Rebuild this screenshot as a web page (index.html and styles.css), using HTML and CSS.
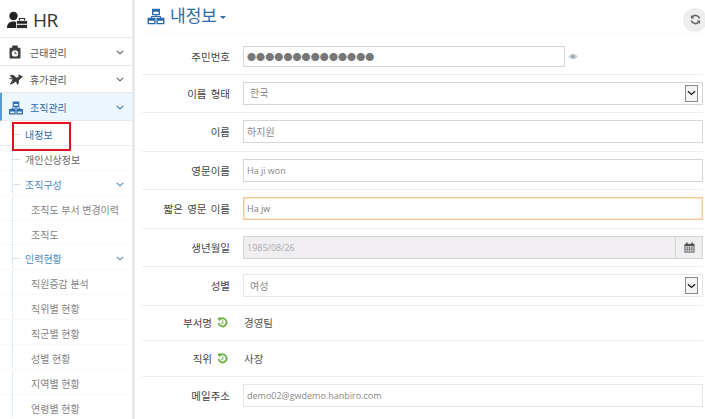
FILE: index.html
```html
<!DOCTYPE html>
<html lang="ko">
  <head>
    <meta charset="UTF-8" />
    <meta name="viewport" content="width=device-width, initial-scale=1" />
    <title>HR</title>
    <link rel="stylesheet" href="styles.css">
  </head>
  <body>
    <svg width="0" height="0" class="defs">
      <symbol id="sitemap" viewBox="0 0 18 18">
        <path d="M5.500 1.500h7v5.500h-7zM.8 11h7v5.500h-7zM10.200 11h7v5.500h-7z" fill="none" stroke="currentColor" stroke-width="1.500"/>
        <path d="M5.500 1.500h7v2.500h-7zM.8 11h7v2.500h-7zM10.200 11h7v2.500h-7z" fill="currentColor"/>
        <path d="M9 7v2M4.300 11V9h9.400v2" fill="none" stroke="currentColor" stroke-width="1.200"/>
      </symbol>
      <symbol id="chevron" viewBox="0 0 10 6">
        <path d="M1 1l4 3.600L9 1" fill="none" stroke="currentColor" stroke-width="1.300"/>
      </symbol>
      <symbol id="history" viewBox="0 0 12 12">
        <path d="M3.400 2.400A4.400 4.400 0 1 1 1.700 6.500" fill="none" stroke="currentColor" stroke-width="2"/>
        <path d="M.6.6h5L2.400 5z" fill="currentColor"/>
        <path d="M6.300 3.600v2.800l-1.600.9" fill="none" stroke="currentColor" stroke-width="1.100"/>
      </symbol>
    </svg>

    <div class="layout">
      <aside class="sidebar">
        <div class="brand">
          <svg class="brand-icon" viewBox="0 0 22 18">
            <circle cx="7.500" cy="5" r="4.200" fill="#222"/>
            <path d="M1 17c0-4 2-6.500 6.500-6.500 2 0 3.500.5 4.500 1.500v5z" fill="#222"/>
            <path d="M10.500 9.500h11v8h-11z" fill="#2b2b2b" stroke="#fff" stroke-width=".8"/>
            <path d="M13.500 9.500V7.500h5v2" fill="none" stroke="#2b2b2b" stroke-width="1.200"/>
            <path d="M10.500 13.300h11" stroke="#fff" stroke-width="1"/>
          </svg>
          <span>HR</span>
        </div>

        <a class="menu-item">
          <svg class="menu-icon" viewBox="0 0 13 15">
            <path d="M3.500.5h6v3h-6z" fill="#333"/>
            <path d="M.8 3h11.400c.3 2 .5 7 0 11.500H.8C.3 10 .5 5 .8 3z" fill="#3c3c3c"/>
            <circle cx="6.500" cy="9" r="3.500" fill="#fff"/>
            <path d="M6.500 7v2.200h1.800" fill="none" stroke="#333" stroke-width="1"/>
          </svg>
          <span class="menu-text">근태관리</span>
          <svg class="chev"><use href="#chevron"/></svg>
        </a>
        <a class="menu-item">
          <svg class="menu-icon" viewBox="0 0 14 11">
            <path d="M.5 1.500L4 .8l3.500 3L10.500 2c1.500-.6 3-.2 3.300.6L10 6.300l-.5 3.700-1.300.7L7 7.500 4.500 9.300 1.500 10.500.8 9.800 2.800 7.200 3.500 4.500z" fill="#3c3c3c"/>
            <path d="M9 .8l3 1.400M.5 4.500l2.500.4" stroke="#3c3c3c" fill="none"/>
          </svg>
          <span class="menu-text">휴가관리</span>
          <svg class="chev"><use href="#chevron"/></svg>
        </a>
        <a class="menu-item active">
          <svg class="menu-icon"><use href="#sitemap"/></svg>
          <span class="menu-text">조직관리</span>
          <svg class="chev"><use href="#chevron"/></svg>
        </a>

        <ul class="submenu">
          <li class="sub current"><span>내정보</span></li>
          <li class="sub"><span>개인신상정보</span></li>
          <li class="sub group"><span>조직구성</span><svg class="chev"><use href="#chevron"/></svg></li>
          <li class="sub deep"><span>조직도 부서 변경이력</span></li>
          <li class="sub deep"><span>조직도</span></li>
          <li class="sub group"><span>인력현황</span><svg class="chev"><use href="#chevron"/></svg></li>
          <li class="sub deep"><span>직원증감 분석</span></li>
          <li class="sub deep"><span>직위별 현황</span></li>
          <li class="sub deep"><span>직군별 현황</span></li>
          <li class="sub deep"><span>성별 현황</span></li>
          <li class="sub deep"><span>지역별 현황</span></li>
          <li class="sub deep"><span>연령별 현황</span></li>
        </ul>
        <div class="red-box"></div>
      </aside>

      <main class="content">
        <header class="page-head">
          <svg class="title-icon"><use href="#sitemap"/></svg>
          <h1>내정보</h1>
          <i class="caret"></i>
          <button class="refresh">
            <svg viewBox="0 0 12 12" width="11" height="11">
              <path d="M10.500 5A4.700 4.700 0 0 0 2.200 3.500M1.500 7a4.700 4.700 0 0 0 8.300 1.500" fill="none" stroke="#666" stroke-width="1.800"/>
              <path d="M1 1v3.800h3.800zM11 11V7.200H7.200z" fill="#666"/>
            </svg>
          </button>
        </header>

        <form class="form">
          <div class="row first">
            <label>주민번호</label>
            <div class="field short"><input class="input dots" type="text" value="●●●●●●●●●●●●●●"></div>
            <svg class="eye" viewBox="0 0 12 8">
              <path d="M.5 4C2 1.700 4 .7 6 .7S10 1.700 11.500 4C10 6.300 8 7.300 6 7.300S2 6.300.5 4z" fill="#c6ced2"/>
              <circle cx="6" cy="4" r="1.900" fill="#97a2a7"/>
            </svg>
          </div>
          <div class="row">
            <label>이름 형태</label>
            <div class="field select-wrap">
              <select class="input select"><option>한국</option></select>
              <span class="select-btn"><svg><use href="#chevron"/></svg></span>
            </div>
          </div>
          <div class="row">
            <label>이름</label>
            <div class="field"><input class="input" type="text" value="하지원"></div>
          </div>
          <div class="row">
            <label>영문이름</label>
            <div class="field"><input class="input latin" type="text" value="Ha ji won"></div>
          </div>
          <div class="row">
            <label>짧은 영문 이름</label>
            <div class="field"><input class="input latin focus" type="text" value="Ha jw"></div>
          </div>
          <div class="row">
            <label>생년월일</label>
            <div class="field date">
              <input class="input latin disabled" type="text" value="1985/08/26" disabled>
              <span class="date-btn">
                <svg viewBox="0 0 12 12" width="11" height="11">
                  <path d="M.5 2h11v9.500H.5z" fill="#555"/>
                  <path d="M1.500 4.500h9v6h-9z" fill="#e8e6ea"/>
                  <path d="M1.500 6.500h9M1.500 8.500h9M3.500 4.500v6M6 4.500v6M8.500 4.500v6" stroke="#666" stroke-width=".7"/>
                  <path d="M2.500.5h1.500v2.500H2.500zM8 .5h1.500v2.500H8z" fill="#444"/>
                </svg>
              </span>
            </div>
          </div>
          <div class="row">
            <label>성별</label>
            <div class="field select-wrap">
              <select class="input select soft"><option>여성</option></select>
              <span class="select-btn"><svg><use href="#chevron"/></svg></span>
            </div>
          </div>
          <div class="row static">
            <label>부서명<svg class="hist"><use href="#history"/></svg></label>
            <div class="value">경영팀</div>
          </div>
          <div class="row static">
            <label>직위<svg class="hist"><use href="#history"/></svg></label>
            <div class="value">사장</div>
          </div>
          <div class="row last">
            <label>메일주소</label>
            <div class="field"><input class="input latin soft" type="text" value="demo02@gwdemo.hanbiro.com"></div>
          </div>
        </form>
      </main>
    </div>
  </body>
</html>
```

FILE: styles.css
```css
* {
  box-sizing: border-box;
}
html,
body {
  margin: 0;
  height: 419px;
  overflow: hidden;
  background: #fff;
}
body {
  font-family: "Open Sans", "Noto Sans CJK KR", sans-serif;
  font-size: 10px;
  color: #555;
}
.defs {
  position: absolute;
}
.layout {
  display: flex;
  height: 419px;
}

/* sidebar */
.sidebar {
  position: relative;
  width: 135px;
  flex: none;
  border-right: 3px solid #e7e9eb;
  overflow: hidden;
}
.brand {
  display: flex;
  align-items: center;
  height: 38px;
  padding: 2px 0 0 6px;
  font-size: 19px;
  letter-spacing: -.6px;
  color: #333;
  border-bottom: 1px solid #e8e8e8;
}
.brand-icon {
  width: 22px;
  height: 18px;
  margin-right: 5px;
}
.menu-item {
  display: flex;
  align-items: center;
  height: 27.500px;
  padding: 2px 8px 0 9px;
  border-bottom: 1px solid #e8e8e8;
}
.menu-icon {
  width: 12px;
  height: 14px;
  margin-right: 9px;
}
.menu-item + .menu-item .menu-icon {
  width: 14px;
  height: 11px;
  margin-right: 7px;
}
.menu-text {
  flex: 1;
}
.chev {
  width: 8px;
  height: 5px;
  color: #555;
}
.menu-item.active {
  height: 28px;
  background: #edf6fc;
  border-left: 2px solid #5d9cd2;
  padding-left: 7px;
  color: #2a6cab;
}
.menu-item.active .chev {
  color: #2a6cab;
}
.menu-item.active .menu-icon {
  color: #2a6cab;
  width: 14px;
  height: 14px;
  margin-right: 7px;
}
.submenu {
  list-style: none;
  margin: 0;
  padding: 0;
  position: relative;
}
.submenu::before {
  content: "";
  position: absolute;
  left: 12px;
  top: 0;
  bottom: 0;
  border-left: 1px dotted #bcd8ee;
}
.sub {
  position: relative;
  display: flex;
  align-items: center;
  justify-content: space-between;
  height: 24.900px;
  padding: 3px 8px 0 25px;
  border-bottom: 1px solid #f6f8fa;
  color: #666;
}
.sub::before {
  content: "";
  position: absolute;
  left: 13px;
  top: 13px;
  width: 7px;
  border-top: 1px solid #d5e2ec;
}
.sub.current {
  color: #2a6cab;
  border-bottom-color: #e3eef7;
}
.sub.group {
  color: #4a88bd;
}
.sub.group .chev {
  color: #4a88bd;
}
.sub.deep {
  padding-left: 31px;
  color: #858585;
}
.sub.deep::before {
  display: none;
}
.red-box {
  position: absolute;
  left: 12px;
  top: 122px;
  width: 59px;
  height: 29px;
  border: 2px solid #e3101f;
}

/* content */
.content {
  flex: 1;
  min-width: 0;
  padding: 0 2px 0 7px;
}
.page-head {
  display: flex;
  align-items: center;
  height: 34px;
  padding: 0 0 1px 5px;
  color: #2a6cab;
  border-bottom: 1px solid #f8f8f8;
}
.title-icon {
  width: 18px;
  height: 17px;
  margin-right: 5px;
}
.page-head h1 {
  margin: 0;
  font-size: 17px;
  font-weight: 400;
  line-height: 20px;
}
.caret {
  margin: 3px 0 0 3px;
  border-top: 3px solid #2a6cab;
  border-left: 3px solid transparent;
  border-right: 3px solid transparent;
}
.refresh {
  margin: 7px 0 0 auto;
  width: 24px;
  height: 24px;
  padding: 0;
  border: 0;
  border-radius: 50%;
  background: #eee;
  display: flex;
  align-items: center;
  justify-content: center;
  transform: translateX(4px);
}
.row {
  display: flex;
  align-items: center;
  height: 38.500px;
  border-bottom: 1px solid #eeeeee;
}
.row.first {
  height: 40.500px;
  padding-top: 12px;
  padding-bottom: 6px;
}
.row.static {
  height: 35.500px;
}
.row.last {
  border-bottom: 0;
}
.row label {
  flex: none;
  display: flex;
  align-items: center;
  justify-content: flex-end;
  width: 88px;
  color: #444;
  margin-right: 13px;
  white-space: nowrap;
  font-size: 10.500px;
  word-spacing: 1.500px;
}
.row.static label {
  padding-right: 2px;
}
.hist {
  flex: none;
  width: 11px;
  height: 11px;
  margin-left: 5px;
  color: #6cb33f;
}
.field {
  flex: 1;
  position: relative;
  display: flex;
}
.field.short {
  flex: none;
  width: 322px;
}
.input {
  width: 100%;
  height: 23px;
  padding: 0 3px;
  border: 1px solid #d6d6d6;
  background: #fff;
  font: inherit;
  color: #888;
  outline: 0;
  border-radius: 0;
}
.input.latin {
  font-size: 9px;
}
.input.dots {
  height: 21px;
  font-size: 9px;
  letter-spacing: .1px;
  color: #777;
}
.input.focus {
  border: 1px solid #f3c99d;
  box-shadow: inset 0 0 0 .5px #f3c99d;
  color: #777;
}
.input.soft {
  border-color: #e6e6e6;
}
.select {
  appearance: none;
  padding-left: 6px;
}
.select-btn {
  position: absolute;
  right: 5px;
  top: 3px;
  width: 13px;
  height: 17px;
  background: #f4f4f4;
  border: 1px solid #8a8a8a;
  display: flex;
  align-items: center;
  justify-content: center;
}
.select-btn svg {
  width: 9px;
  height: 6px;
  color: #111;
}
.date .input.disabled {
  background: #f1eef2;
  color: #aaa;
  border-color: #d4d4d4;
  border-right: 0;
}
.date-btn {
  flex: none;
  width: 28px;
  height: 23px;
  border: 1px solid #d4d4d4;
  background: #f1eef2;
  display: flex;
  align-items: center;
  justify-content: center;
}
.value {
  padding-left: 1px;
  font-size: 10.500px;
  color: #555;
}
.eye {
  width: 10px;
  height: 7px;
  margin-left: 3px;
}
```
